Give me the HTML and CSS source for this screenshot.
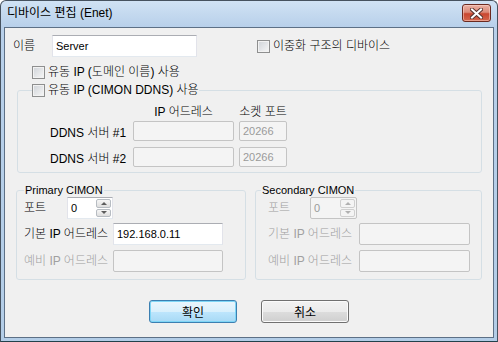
FILE: index.html
```html
<!doctype html>
<html lang="ko">
  <head>
    <meta charset="UTF-8" />
    <title>디바이스 편집 (Enet)</title>
    <link rel="stylesheet" href="styles.css">
  </head>
  <body>
    <div class="window">
      <div class="titlebar">
        <span class="title">디바이스 편집 (Enet)</span>
        <span class="close-btn">
          <svg width="13" height="11" viewBox="0 0 13 11">
            <path d="M2 1.5 L11 9.5 M11 1.5 L2 9.5" stroke="#5a3530" stroke-width="4" stroke-linecap="square"/>
            <path d="M2 1.5 L11 9.5 M11 1.5 L2 9.5" stroke="#ffffff" stroke-width="2" stroke-linecap="square"/>
          </svg>
        </span>
      </div>

      <div class="frame">
        <div class="client">
          <div class="name-row">
            <span class="lbl name-lbl">이름</span>
            <input class="edit name-edit" type="text" value="Server">
            <label class="check redundant"><span class="box"></span>이중화 구조의 디바이스</label>
          </div>

          <label class="check dyn-domain"><span class="box"></span>유동 IP (도메인 이름) 사용</label>

          <fieldset class="group ddns">
            <legend><label class="check"><span class="box"></span>유동 IP (CIMON DDNS) 사용</label></legend>
            <div class="ddns-body">
              <div class="ddns-head">
                <span class="col-ip">IP 어드레스</span>
                <span class="col-port">소켓 포트</span>
              </div>
              <div class="ddns-grid">
                <span class="lbl">DDNS 서버 #1</span>
                <input class="edit off ddns-ip" type="text" value="" disabled>
                <input class="edit off ddns-port" type="text" value="20266" disabled>
                <span class="lbl">DDNS 서버 #2</span>
                <input class="edit off ddns-ip" type="text" value="" disabled>
                <input class="edit off ddns-port" type="text" value="20266" disabled>
              </div>
            </div>
          </fieldset>

          <div class="cimon-row">
            <fieldset class="group cimon primary">
              <legend>Primary CIMON</legend>
              <div class="rows">
                <div class="field">
                  <span class="lbl port-lbl">포트</span>
                  <div class="spin">
                    <span class="spin-val">0</span>
                    <span class="spin-btns"><span class="up"></span><span class="down"></span></span>
                  </div>
                </div>
                <div class="field">
                  <span class="lbl ip-lbl">기본 IP 어드레스</span>
                  <input class="edit ip-edit" type="text" value="192.168.0.11">
                </div>
                <div class="field spare">
                  <span class="lbl ip-lbl grey">예비 IP 어드레스</span>
                  <input class="edit off ip-edit" type="text" value="" disabled>
                </div>
              </div>
            </fieldset>

            <fieldset class="group cimon secondary">
              <legend>Secondary CIMON</legend>
              <div class="rows">
                <div class="field">
                  <span class="lbl port-lbl grey">포트</span>
                  <div class="spin off">
                    <span class="spin-val">0</span>
                    <span class="spin-btns"><span class="up"></span><span class="down"></span></span>
                  </div>
                </div>
                <div class="field">
                  <span class="lbl ip-lbl grey">기본 IP 어드레스</span>
                  <input class="edit off ip-edit" type="text" value="" disabled>
                </div>
                <div class="field spare">
                  <span class="lbl ip-lbl grey">예비 IP 어드레스</span>
                  <input class="edit off ip-edit" type="text" value="" disabled>
                </div>
              </div>
            </fieldset>
          </div>

          <div class="buttons">
            <button class="btn default">확인</button>
            <button class="btn">취소</button>
          </div>
        </div>
      </div>
    </div>
  </body>
</html>
```

FILE: styles.css
```css
body {
    margin: 0;
    padding: 0;
    background: #ffffff;
}

/* Window frame */
.window {
    width: 498px;
    height: 342px;
    box-sizing: border-box;
    border: 1px solid #46525f;
    border-bottom-color: #22414b;
    border-radius: 6px 6px 0 0;
    background: linear-gradient(#d0e2f4, #b8d0ea 26px, #b3cde7);
    display: flex;
    flex-direction: column;
    overflow: hidden;
    font: 300 12px/14px "Liberation Sans", "Noto Sans CJK KR", sans-serif;
    color: #000;
}

.titlebar {
    height: 26px;
    flex: none;
    display: flex;
    align-items: flex-start;
}

.title {
    margin: 5px 0 0 6px;
    font-weight: 400;
}

.close-btn {
    margin: 3px 6px 0 auto;
    width: 29px;
    height: 18px;
    box-sizing: border-box;
    border: 1px solid #6b2a20;
    border-radius: 3px;
    background: linear-gradient(#eab1a4 0, #dc8a78 45%, #c9462f 55%, #d5674d 100%);
    box-shadow: inset 0 0 0 1px rgba(255, 220, 210, 0.5);
    display: flex;
    align-items: center;
    justify-content: center;
}

.frame {
    flex: 1;
    display: flex;
    padding: 0 3px 3px;
}

.client {
    flex: 1;
    border: 1px solid #5d7086;
    background: #f0f0f0;
}

.lbl {
    white-space: nowrap;
}

.grey {
    color: #a0a0a0;
}

/* Edit boxes */
.edit {
    box-sizing: border-box;
    height: 22px;
    margin: 0;
    padding: 0 0 0 3px;
    border: 1px solid;
    border-color: #abadb3 #e2e3ea #e3e9ef #e2e3ea;
    background: #ffffff;
    font: 11px "Liberation Sans", sans-serif;
    color: #000;
    outline: none;
}

.edit.off {
    background: #f4f4f4;
    border-color: #c4c4c4;
    border-radius: 2px;
    color: #9a9a9a;
}

/* Check boxes */
.check {
    display: flex;
    align-items: center;
    gap: 3px;
    width: max-content;
    height: 14px;
    white-space: nowrap;
}

.box {
    width: 13px;
    height: 13px;
    box-sizing: border-box;
    border: 1px solid #8e8f8f;
    background: linear-gradient(135deg, #cfd3d8, #f7f7f7);
    box-shadow: inset 0 0 0 1px #f2f2f2;
}

.name-row {
    display: flex;
    align-items: center;
    padding: 7px 0 0 8px;
}

.name-lbl {
    width: 39px;
}

.name-edit {
    width: 145px;
}

.redundant {
    margin-left: 60px;
}

.dyn-domain {
    margin: 8px 0 0 27px;
}

/* Group boxes */
.group {
    margin: 0;
    padding: 0;
    min-width: 0;
    border: 1px solid #d5dfe5;
    border-radius: 3px;
}

.group legend {
    padding: 0;
}

.ddns {
    width: 465px;
    box-sizing: border-box;
    margin: 4px 0 0 12px;
    padding: 8px 0 5px;
}

.ddns legend {
    margin-left: 14px;
}

.ddns-body {
    padding-left: 32px;
}

.ddns-head {
    display: flex;
    margin: 0 0 2px 83px;
}

.col-ip {
    width: 106px;
    padding-right: 5px;
    box-sizing: border-box;
    text-align: center;
}

.col-port {
    width: 48px;
    text-align: center;
}

.ddns-grid {
    display: grid;
    grid-template-columns: 83px 106px 48px;
    row-gap: 6px;
    align-items: center;
}

.ddns-grid .lbl {
    padding-top: 4px;
}

.ddns-ip {
    width: 101px;
    height: 20px;
}

.ddns-port {
    width: 48px;
    height: 20px;
}

/* CIMON groups */
.cimon-row {
    display: flex;
    gap: 9px;
    margin: 10px 0 0 11px;
}

.cimon {
    box-sizing: border-box;
    padding-bottom: 7px;
}

.cimon legend {
    font: 400 11px/14px "Liberation Sans", sans-serif;
    padding: 0 1px;
}

.rows {
    display: flex;
    flex-direction: column;
    gap: 4px;
}

.field {
    display: flex;
    align-items: center;
}

.field.spare {
    margin-top: 1px;
}

.primary {
    width: 230px;
}

.primary legend {
    margin-left: 7px;
}

.primary .rows { padding-left: 7px; }
.primary .port-lbl { width: 43px; }
.primary .ip-lbl { width: 89px; }
.primary .spin { width: 46px; }
.primary .ip-edit { width: 110px; }

.secondary {
    width: 227px;
}

.secondary legend {
    margin-left: 5px;
}

.secondary .rows { padding-left: 12px; }
.secondary .port-lbl { width: 42px; }
.secondary .ip-lbl { width: 91px; }
.secondary .spin { width: 47px; }
.secondary .ip-edit { width: 111px; }

/* Up-down control */
.spin {
    display: flex;
    height: 22px;
    box-sizing: border-box;
    border: 1px solid;
    border-color: #abadb3 #e2e3ea #e3e9ef #e2e3ea;
    background: #ffffff;
}

.spin.off {
    background: #f4f4f4;
    border-color: #c4c4c4;
    border-radius: 2px;
    color: #9a9a9a;
}

.spin-val {
    flex: 1;
    padding-left: 3px;
    font: 11px/20px "Liberation Sans", sans-serif;
}

.spin-btns {
    width: 15px;
    display: flex;
    flex-direction: column;
    gap: 1px;
    padding: 1px 1px 1px 0;
}

.spin-btns span {
    flex: 1;
    border: 1px solid #b7bcc2;
    border-radius: 2px;
    background: linear-gradient(#f6f6f6, #dedede);
    display: flex;
    align-items: center;
    justify-content: center;
}

.spin-btns .up::after {
    content: '';
    border-left: 3px solid transparent;
    border-right: 3px solid transparent;
    border-bottom: 3px solid #5c5c5c;
}

.spin-btns .down::after {
    content: '';
    border-left: 3px solid transparent;
    border-right: 3px solid transparent;
    border-top: 3px solid #5c5c5c;
}

.spin.off .spin-btns span {
    border-color: #cfcfcf;
    background: #f4f4f4;
}

.spin.off .spin-btns .up::after { border-bottom-color: #b0b0b0; }
.spin.off .spin-btns .down::after { border-top-color: #b0b0b0; }

/* Dialog buttons */
.buttons {
    display: flex;
    justify-content: center;
    gap: 24px;
    margin-top: 20px;
}

.btn {
    width: 88px;
    height: 23px;
    padding: 0;
    border: 1px solid #707070;
    border-radius: 3px;
    background: linear-gradient(#f2f2f2 0, #ebebeb 50%, #dddddd 50%, #cfcfcf 100%);
    box-shadow: inset 0 0 0 1px #fbfbfb;
    font: 12px/14px "Noto Sans CJK KR", sans-serif;
    color: #000;
}

.btn.default {
    border-color: #3c7fb1;
    background: linear-gradient(#eaf6fd 0, #d9f0fc 50%, #bee6fd 50%, #a7d9f5 100%);
    box-shadow: inset 0 0 0 1px #7fd6f6;
}
```
